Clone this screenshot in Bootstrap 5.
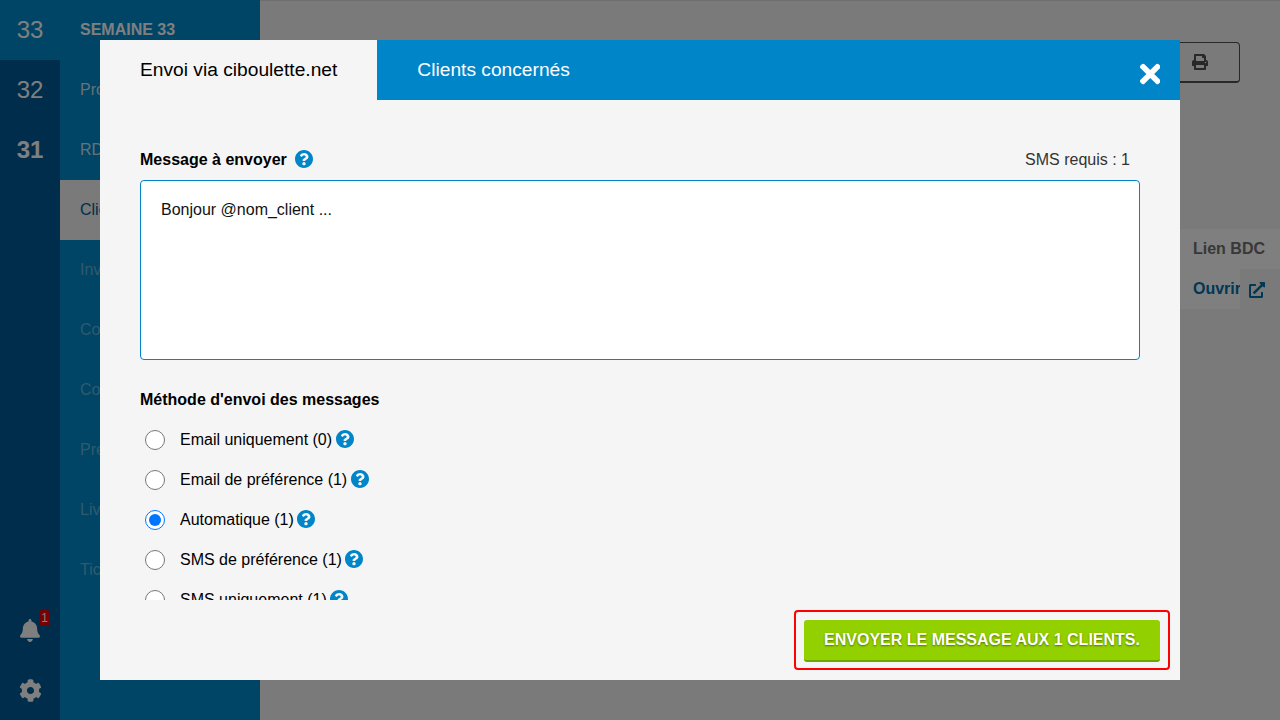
<!DOCTYPE html>
<html lang="fr">
<head>
<meta charset="utf-8">
<title>Envoi via ciboulette.net</title>
<link href="https://cdn.jsdelivr.net/npm/bootstrap@5.3.0/dist/css/bootstrap.min.css" rel="stylesheet">
<style>
html,body{height:100%;overflow:hidden}
body{font-family:"Liberation Sans",Arial,sans-serif;font-size:16px;background:#f5f5f5;color:#212121}
.app-shell{height:720px;border-top:1px solid #dcdcdc}
.week-col{width:60px;background:#005a98;margin-top:-1px}
.week-item{height:60px;font-size:24px;color:#fff}
.week-item.is-current{background:#008aca}
.week-item.is-bold{font-weight:700}
.side-icon{height:60px;position:relative}
.side-icon svg{fill:#fff}
.bell-svg{width:20px;height:23px}
.cog-svg{width:23px;height:23px}
.bell-badge{position:absolute;left:39px;top:10px;width:11px;height:16px;border-radius:3px;background:#ee0000;color:#fff;font-size:12px;line-height:16px;text-align:center;padding:0}
.menu-col{width:200px;background:#008aca;margin-top:-1px}
.menu-item{height:60px;padding-left:20px;color:rgba(255,255,255,.38);white-space:nowrap}
.menu-item.is-bright{color:rgba(255,255,255,.8)}
.menu-item.is-title{color:#fff;font-weight:700}
.menu-item.is-active{background:#f5f5f5;color:#005a98}
.page-area{min-width:0}
.print-btn{width:120px;height:41px;margin-top:41px;margin-right:40px;border:1px solid #505050;border-bottom-width:2px;border-radius:4px;background:#f5f5f5;padding:0}
.print-btn svg{width:16px;height:16px;fill:#505050;margin-left:71px;margin-top:-1px}
.bdc-table{width:100px;margin-top:146px;background:#fff}
.bdc-cell{height:40px;padding-left:13px;font-weight:700;color:#707070;white-space:nowrap}
.bdc-open{color:#0070ac;padding-right:0}
.bdc-word{width:47px;flex:none}
.bdc-icon{width:40px;height:40px;background:#f5f5f5;flex:none;padding:2px 0 0 9px}
.bdc-icon svg{width:16px;height:16px;fill:#0070ac}
.sheet-dialog{max-width:1080px;width:1080px;height:640px;margin:40px auto 0 100px}
.sheet-content{height:640px;background:#f5f5f5;border:0;border-radius:0;overflow:hidden}
.sheet-head{height:60px;background:#0085c8;flex:none}
.sheet-tab{height:60px;padding:0 40px;font-size:19.2px;color:#fff;background:transparent;border:0}
.sheet-tab.is-on{background:#f5f5f5;color:#000}
.sheet-close{width:60px;height:60px;border:0;background:transparent;padding:0;margin-top:4px}
.sheet-close svg{width:20.5px;height:32px;fill:#fff}
.sheet-body{flex:1 1 auto;min-height:0;overflow:hidden;padding:48px 40px 0}
.field-title{font-weight:700;color:#000;height:24px}
.help-mark{width:18px;height:18px;fill:#0085c8;flex:none;margin-top:-2px}
.sms-need{color:#333;margin-right:10px}
.msg-area{height:180px;margin-top:8px;border:1px solid #0085c8;border-radius:4px;padding:17px 20px;font-size:16px;color:#111;resize:none;box-shadow:none}
.method-title{margin-top:28px;margin-bottom:8px}
.method-row{height:40px;padding-left:5px;color:#000}
.method-row input{width:20px;height:20px;margin:0 15px 0 0;flex:none}
.method-row label{margin-right:3.5px}
.sheet-foot{height:80px;flex:none;padding:10px}
.send-frame{border:2px solid #f00;border-radius:4px;padding:8px;width:376px}
.send-btn{display:block;width:356px;height:42px;padding:0;border:0;border-bottom:2px solid #6aa800;border-radius:3px;background:#92d000;color:#fff;font-weight:700;font-size:16px;text-transform:uppercase;text-shadow:0 1px 2px rgba(0,0,0,.45)}
</style>
</head>
<body>
<div class="app-shell d-flex">
  <div class="week-col d-flex flex-column flex-shrink-0">
    <div class="week-item is-current d-flex align-items-center justify-content-center">33</div>
    <div class="week-item d-flex align-items-center justify-content-center">32</div>
    <div class="week-item is-bold d-flex align-items-center justify-content-center">31</div>
    <div class="side-icon d-flex align-items-center justify-content-center mt-auto">
      <svg class="bell-svg" viewBox="0 0 448 512"><path d="M224 512c35.32 0 63.97-28.65 63.97-64H160.03c0 35.35 28.65 64 63.97 64zm215.39-149.71c-19.32-20.76-55.47-51.99-55.47-154.29 0-77.7-54.48-139.9-127.94-155.16V32c0-17.67-14.32-32-31.98-32s-31.98 14.33-31.98 32v20.84C118.56 68.1 64.08 130.3 64.08 208c0 102.3-36.15 133.53-55.47 154.29-6 6.45-8.66 14.16-8.61 21.71.11 16.4 12.98 32 32.1 32h383.8c19.12 0 32-15.6 32.1-32 .05-7.55-2.61-15.27-8.61-21.71z"/></svg>
      <span class="bell-badge">1</span>
    </div>
    <div class="side-icon d-flex align-items-center justify-content-center">
      <svg class="cog-svg" viewBox="0 0 512 512"><path d="M487.4 315.7l-42.6-24.6c4.3-23.2 4.3-47 0-70.2l42.6-24.6c4.9-2.8 7.1-8.6 5.5-14-11.1-35.6-30-67.8-54.7-94.6-3.8-4.1-10-5.1-14.8-2.3L380.8 110c-17.9-15.4-38.5-27.3-60.8-35.1V25.8c0-5.6-3.9-10.5-9.4-11.7-36.7-8.2-74.3-7.8-109.2 0-5.5 1.2-9.4 6.1-9.4 11.7V75c-22.2 7.9-42.8 19.8-60.8 35.1L88.7 85.5c-4.9-2.8-11-1.9-14.8 2.3-24.7 26.7-43.6 58.9-54.7 94.6-1.7 5.4.6 11.2 5.5 14L67.3 221c-4.3 23.2-4.3 47 0 70.2l-42.6 24.6c-4.9 2.8-7.1 8.6-5.5 14 11.1 35.6 30 67.8 54.7 94.6 3.8 4.1 10 5.1 14.8 2.3l42.6-24.6c17.9 15.4 38.5 27.3 60.8 35.1v49.2c0 5.6 3.9 10.5 9.4 11.7 36.7 8.2 74.3 7.8 109.2 0 5.5-1.2 9.4-6.1 9.4-11.7v-49.2c22.2-7.9 42.8-19.8 60.8-35.1l42.6 24.6c4.9 2.8 11 1.9 14.8-2.3 24.7-26.7 43.6-58.9 54.7-94.6 1.5-5.5-.7-11.3-5.6-14.1zM256 336c-44.1 0-80-35.9-80-80s35.9-80 80-80 80 35.9 80 80-35.9 80-80 80z"/></svg>
    </div>
  </div>
  <div class="menu-col d-flex flex-column flex-shrink-0">
    <div class="menu-item is-title d-flex align-items-center">SEMAINE 33</div>
    <div class="menu-item is-bright d-flex align-items-center">Produits</div>
    <div class="menu-item is-bright d-flex align-items-center">RDV</div>
    <div class="menu-item is-active d-flex align-items-center">Clients</div>
    <div class="menu-item d-flex align-items-center">Inventaire</div>
    <div class="menu-item d-flex align-items-center">Commandes</div>
    <div class="menu-item d-flex align-items-center">Comptes</div>
    <div class="menu-item d-flex align-items-center">Présentation</div>
    <div class="menu-item d-flex align-items-center">Livraisons</div>
    <div class="menu-item d-flex align-items-center">Tickets</div>
  </div>
  <div class="page-area flex-grow-1 d-flex flex-column align-items-end">
    <button class="print-btn d-flex align-items-center" type="button" aria-label="Imprimer">
      <svg viewBox="0 0 512 512"><path d="M448 192V77.25c0-8.49-3.37-16.62-9.37-22.63L393.37 9.37c-6-6-14.14-9.37-22.63-9.37H96C78.33 0 64 14.33 64 32v160c-35.35 0-64 28.65-64 64v112c0 8.84 7.16 16 16 16h48v96c0 17.67 14.33 32 32 32h320c17.67 0 32-14.33 32-32v-96h48c8.84 0 16-7.16 16-16V256c0-35.35-28.65-64-64-64zm-64 256H128v-96h256v96zm0-224H128V64h192v48c0 8.84 7.16 16 16 16h48v96zm48 72c-13.25 0-24-10.75-24-24 0-13.26 10.75-24 24-24s24 10.74 24 24c0 13.25-10.75 24-24 24z"/></svg>
    </button>
    <div class="bdc-table">
      <div class="bdc-cell d-flex align-items-center">Lien BDC</div>
      <div class="bdc-cell bdc-open d-flex align-items-center"><span class="bdc-word">Ouvrir</span>
        <span class="bdc-icon d-flex align-items-center">
          <svg viewBox="0 0 512 512"><path d="M432,320H400a16,16,0,0,0-16,16V448H64V128H208a16,16,0,0,0,16-16V80a16,16,0,0,0-16-16H48A48,48,0,0,0,0,112V464a48,48,0,0,0,48,48H400a48,48,0,0,0,48-48V336A16,16,0,0,0,432,320ZM488,0h-128c-21.37,0-32.05,25.91-17,41l35.73,35.73L135,320.37a24,24,0,0,0,0,34L157.67,377a24,24,0,0,0,34,0L435.28,133.32,471,169c15,15,41,4.5,41-17V24A24,24,0,0,0,488,0Z"/></svg>
        </span>
      </div>
    </div>
  </div>
</div>

<div class="modal-backdrop show"></div>

<div class="modal d-block" tabindex="-1">
  <div class="modal-dialog sheet-dialog">
    <div class="modal-content sheet-content d-flex flex-column">
      <div class="sheet-head d-flex">
        <button class="sheet-tab is-on" type="button">Envoi via ciboulette.net</button>
        <button class="sheet-tab" type="button">Clients concernés</button>
        <button class="sheet-close ms-auto d-flex align-items-center justify-content-center" type="button" aria-label="Fermer">
          <svg viewBox="0 0 352 512"><path d="M242.72 256l100.07-100.07c12.28-12.28 12.28-32.19 0-44.48l-22.24-22.24c-12.28-12.28-32.19-12.28-44.48 0L176 189.28 75.93 89.21c-12.28-12.28-32.19-12.28-44.48 0L9.21 111.45c-12.28 12.28-12.28 32.19 0 44.48L109.28 256 9.21 356.07c-12.28 12.28-12.28 32.19 0 44.48l22.24 22.24c12.28 12.28 32.2 12.28 44.48 0L176 322.72l100.07 100.07c12.28 12.28 32.2 12.28 44.48 0l22.24-22.24c12.28-12.28 12.28-32.19 0-44.48L242.72 256z"/></svg>
        </button>
      </div>
      <div class="sheet-body">
        <div class="d-flex align-items-center justify-content-between">
          <div class="field-title d-flex align-items-center gap-2">Message à envoyer
            <svg class="help-mark" viewBox="8 8 496 496"><use href="#q"/></svg>
          </div>
          <div class="sms-need">SMS requis : 1</div>
        </div>
        <textarea class="form-control msg-area">Bonjour @nom_client ...</textarea>
        <div class="field-title method-title">Méthode d'envoi des messages</div>
        <div class="method-row d-flex align-items-center">
          <input type="radio" name="m" id="m1"><label for="m1">Email uniquement (0)</label>
          <svg class="help-mark" viewBox="8 8 496 496"><use href="#q"/></svg>
        </div>
        <div class="method-row d-flex align-items-center">
          <input type="radio" name="m" id="m2"><label for="m2">Email de préférence (1)</label>
          <svg class="help-mark" viewBox="8 8 496 496"><use href="#q"/></svg>
        </div>
        <div class="method-row d-flex align-items-center">
          <input type="radio" name="m" id="m3" checked><label for="m3">Automatique (1)</label>
          <svg class="help-mark" viewBox="8 8 496 496"><use href="#q"/></svg>
        </div>
        <div class="method-row d-flex align-items-center">
          <input type="radio" name="m" id="m4"><label for="m4">SMS de préférence (1)</label>
          <svg class="help-mark" viewBox="8 8 496 496"><use href="#q"/></svg>
        </div>
        <div class="method-row d-flex align-items-center">
          <input type="radio" name="m" id="m5"><label for="m5">SMS uniquement (1)</label>
          <svg class="help-mark" viewBox="8 8 496 496"><use href="#q"/></svg>
        </div>
      </div>
      <div class="sheet-foot d-flex justify-content-end">
        <div class="send-frame">
          <button class="send-btn" type="button">Envoyer le message aux 1 clients.</button>
        </div>
      </div>
    </div>
  </div>
</div>
<svg width="0" height="0" class="d-block" aria-hidden="true"><defs><path id="q" d="M504 256c0 136.997-111.043 248-248 248S8 392.997 8 256C8 119.083 119.043 8 256 8s248 111.083 248 248zM262.655 90c-54.497 0-89.255 22.957-116.549 63.758-3.536 5.286-2.353 12.415 2.715 16.258l34.699 26.31c5.205 3.947 12.621 3.008 16.665-2.122 17.864-22.658 30.113-35.797 57.303-35.797 20.429 0 45.698 13.148 45.698 32.958 0 14.976-12.363 22.667-32.534 33.976C247.128 238.528 216 254.941 216 296v4c0 6.627 5.373 12 12 12h56c6.627 0 12-5.373 12-12v-1.333c0-28.462 83.186-29.647 83.186-106.667 0-58.002-60.165-102-116.531-102zM256 338c-25.365 0-46 20.635-46 46 0 25.364 20.635 46 46 46s46-20.636 46-46c0-25.365-20.635-46-46-46z"/></defs></svg>
<script src="https://cdn.jsdelivr.net/npm/bootstrap@5.3.0/dist/js/bootstrap.bundle.min.js"></script>
</body>
</html>
